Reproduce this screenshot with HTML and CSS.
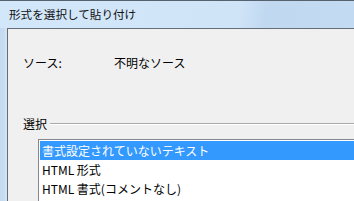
FILE: index.html
```html
<!DOCTYPE html>
<html lang="ja">
<head>
    <meta charset="UTF-8">
    <title>形式を選択して貼り付け</title>
    <link rel="stylesheet" href="styles.css">
</head>
<body>
    <div id="window">
        <div id="title_bar">形式を選択して貼り付け</div>
        <div id="frame">
            <div id="client">
                <div class="source_row">
                    <span class="source_label">ソース:</span>
                    <span class="source_value">不明なソース</span>
                </div>
                <div class="group_head">
                    <span class="group_title">選択</span>
                    <span class="group_line"></span>
                </div>
                <ul id="format_list">
                    <li class="item selected">書式設定されていないテキスト</li>
                    <li class="item">HTML 形式</li>
                    <li class="item">HTML 書式(コメントなし)</li>
                </ul>
            </div>
        </div>
    </div>
</body>
</html>
```

FILE: styles.css
```css
* {
    margin: 0;
    padding: 0;
    box-sizing: border-box;
}

html, body {
    width: 354px;
    height: 201px;
    overflow: hidden;
    font-family: "Noto Sans CJK JP", "Noto Sans", sans-serif;
    font-size: 12px;
    color: #000;
}

ul {
    list-style: none;
}

#window {
    height: 100%;
    display: flex;
    flex-direction: column;
    border-top: 1px solid #56636f;
    background: linear-gradient(100deg, #d3e7fb 0%, #d0e4f8 62%, #c0d8f0 69%, #c3dbf3 100%);
}

/* タイトルバー */
#title_bar {
    height: 27px;
    line-height: 26px;
    padding-left: 9px;
    font-size: 11.6px;
    color: #111;
}

#frame {
    flex: 1;
    display: flex;
    min-height: 0;
    padding-left: 7px;
    background: linear-gradient(90deg, #c4daf0 0px, #c8ddf2 5px, #dde9f5 6px, #c4daf0 7px);
}

#client {
    flex: 1;
    display: flex;
    flex-direction: column;
    min-height: 0;
    background-color: #f0f0f0;
    border-top: 1px solid #646d78;
    border-left: 1px solid #646d78;
    padding-left: 15px;
}

.source_row {
    display: flex;
    margin-top: 25px;
    line-height: 18px;
}

.source_label {
    width: 91px;
}

.group_head {
    display: flex;
    align-items: center;
    margin-top: 43px;
    line-height: 18px;
}

.group_line {
    flex: 1;
    margin-left: 3px;
    margin-top: -1px;
    border-top: 1px solid #a9a9a9;
    border-bottom: 1px solid #fff;
}

#format_list {
    flex: 1;
    min-height: 0;
    overflow: hidden;
    margin-top: 6px;
    margin-left: 15px;
    background-color: #fff;
    border: 1px solid #828790;
    border-right: none;
    border-bottom: none;
    padding: 1px 0 0 1px;
}

.item {
    height: 19px;
    line-height: 19px;
    padding-left: 2px;
    white-space: nowrap;
}

.selected {
    background-color: #3399ff;
    color: #fff;
}
```
